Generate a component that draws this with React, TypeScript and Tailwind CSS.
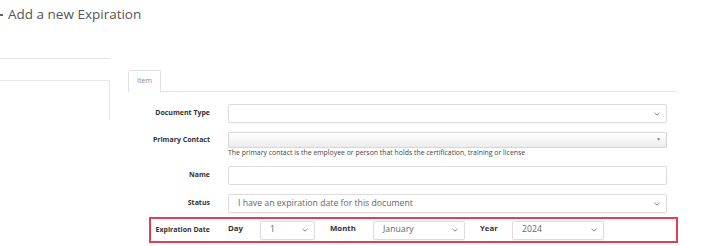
import React from "react";

function Chevron({ className = "" }: { className?: string }) {
  return (
    <svg width="6" height="4" viewBox="0 0 6 4" className={className} fill="none">
      <path d="M0.5 0.8 L3 3.2 L5.5 0.8" stroke="#777" strokeWidth="0.9" />
    </svg>
  );
}

function Label({ children, className = "" }: { children: React.ReactNode; className?: string }) {
  return (
    <div className={`shrink-0 text-right font-bold text-[#333] ${className}`}>{children}</div>
  );
}

function Select({ value, width, height = "h-[19px]" }: { value?: string; width: string; height?: string }) {
  return (
    <div
      className={`flex ${width} ${height} shrink-0 items-center justify-between rounded-[2px] border border-[#dcdcdc] bg-white pl-[9px] pr-[6px] shadow-[0_1px_1px_rgba(0,0,0,0.04)]`}
    >
      <span className="text-[8.7px] text-[#666]">{value}</span>
      <Chevron />
    </div>
  );
}

export default function App() {
  return (
    <div className="h-[246px] w-[705px] overflow-hidden bg-white font-['Open_Sans',sans-serif] text-[#333]">
      <div className="flex h-[30px] items-center">
        <span className="h-[1.5px] w-[3px] bg-[#666]" />
        <h1 className="ml-[5px] text-[13.5px] leading-none text-[#555]">Add a new Expiration</h1>
      </div>

      <div className="flex">
        <div className="w-[110px] shrink-0 pt-[28px]">
          <div className="border-t border-[#e6e6e6]" />
          <div className="mt-[21px] h-[40px] border-t border-r border-[#e6e6e6]" />
        </div>

        <div className="ml-[18px] w-[550px] shrink-0 pt-[40px]">
          <div className="flex items-end">
            <div className="flex h-[22px] w-[33px] items-center justify-center rounded-t-[2px] border border-b-0 border-[#e2e2e2] text-[7px] text-[#888]">
              Item
            </div>
            <div className="mr-[2px] flex-1 border-b border-[#e2e2e2]" />
          </div>

          <div className="pt-[12px]">
            <div className="flex items-center">
              <Label className="w-[82px] text-[7px]">Document Type</Label>
              <div className="ml-[18px]">
                <Select width="w-[439px]" />
              </div>
            </div>

            <div className="mt-[9px] flex items-center">
              <Label className="w-[82px] text-[7px]">Primary Contact</Label>
              <div className="ml-[18px] flex h-[16px] w-[439px] items-center justify-end rounded-[2px] border border-[#d6d6d6] bg-gradient-to-b from-white to-[#ececec] pr-[5px]">
                <span className="text-[5px] text-[#888]">▼</span>
              </div>
            </div>
            <div className="ml-[100px] h-[9px] text-[6.9px] leading-[9px] text-[#444]">
              The primary contact is the employee or person that holds the certification, training or license
            </div>

            <div className="mt-[9px] flex items-center">
              <Label className="w-[82px] text-[7px]">Name</Label>
              <div className="ml-[18px] h-[19px] w-[439px] rounded-[2px] border border-[#dcdcdc] bg-white" />
            </div>

            <div className="mt-[9px] flex items-center">
              <Label className="w-[82px] text-[7px]">Status</Label>
              <div className="ml-[18px]">
                <Select width="w-[439px]" value="I have an expiration date for this document" />
              </div>
            </div>

            <div className="ml-[21px] mt-[4px] flex h-[26px] w-[529px] items-center border-2 border-[#e2404e]">
              <Label className="w-[59px] text-[7px]">Expiration Date</Label>
              <Label className="mb-[3px] ml-[18px] w-[32px] text-[7.8px] !text-left">Day</Label>
              <Select width="w-[55px]" value="1" />
              <Label className="mb-[3px] ml-[15px] w-[43px] text-[7.8px] !text-left">Month</Label>
              <Select width="w-[92px]" value="January" />
              <Label className="mb-[3px] ml-[15px] w-[32px] text-[7.8px] !text-left">Year</Label>
              <Select width="w-[92px]" value="2024" />
            </div>
          </div>
        </div>
      </div>
    </div>
  );
}
